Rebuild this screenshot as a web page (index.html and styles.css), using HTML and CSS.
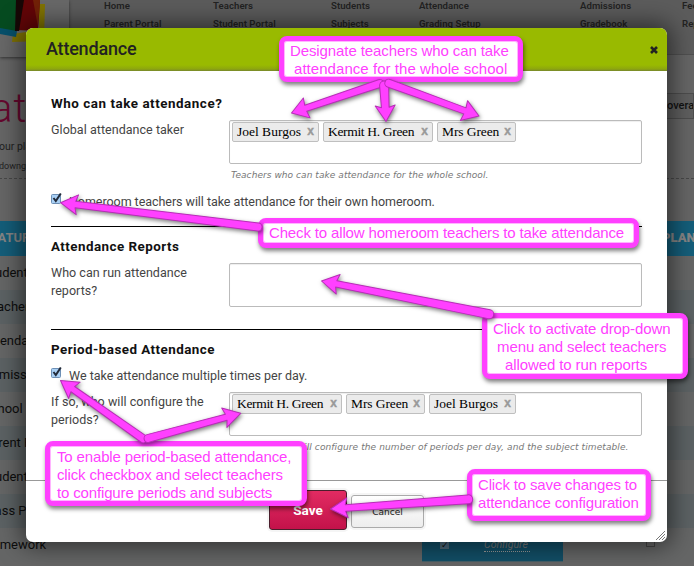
FILE: index.html
```html
<!DOCTYPE html>
<html lang="en">
<head>
<meta charset="utf-8">
<title>Attendance</title>
<link rel="stylesheet" href="styles.css">
</head>
<body>
<div class="page">
  <header class="top">
    <div class="logo">
      <svg width="69" height="56" viewBox="0 0 69 56">
        <path d="M39 4l6 0-1 37-32 1 1-8 26-4z" fill="#807303"/>
        <path d="M0 0h17l-1 31-16 1z" fill="#064b20"/>
        <path d="M0 28l17 3-1 6-16-3z" fill="#07506b"/>
        <path d="M16 0h24l-2 31-22-1z" fill="#620507"/>
        <path d="M16 0h8l-5 31h-4z" fill="#170706"/>
        <path d="M33 0h7l-2 27z" fill="#722107"/>
      </svg>
    </div>
    <nav class="nav">
      <div><span>Home</span><span>Parent Portal</span></div>
      <div><span>Teachers</span><span>Student Portal</span></div>
      <div><span>Students</span><span>Subjects</span></div>
      <div><span>Attendance</span><span>Grading Setup</span></div>
      <div><span>Admissions</span><span>Gradebook</span></div>
      <div><span>Fees</span><span>Reports</span></div>
    </nav>
  </header>
  <section class="intro">
    <div class="intro-row"><h1>at</h1><span class="select">overall</span></div>
    <p class="plan-note">our plan</p>
    <p class="small-note">downgrade</p>
  </section>
  <section class="table">
    <div class="row head"><span>FEATURES</span><b>PLAN</b></div>
    <div class="row"><span>Students</span></div>
    <div class="row alt"><span>Teachers</span></div>
    <div class="row"><span>Attendance</span></div>
    <div class="row alt"><span>Admissions</span></div>
    <div class="row"><span>School</span></div>
    <div class="row alt"><span>Parent Portal</span></div>
    <div class="row"><span>Student</span></div>
    <div class="row alt"><span>Class Pages</span></div>
    <div class="row last"><span>Homework <i>''</i></span>
      <div class="plan"><i class="dim-box">✓</i><em>Configure</em></div><i class="dim-box empty"></i></div>
  </section>
</div>

<div class="modal">
  <div class="modal-head"><h2>Attendance</h2>
    <svg class="close" width="8" height="8" viewBox="0 0 8 8"><path d="M1 1l6 6M7 1L1 7" stroke="#222" stroke-width="2.6"/></svg>
  </div>
  <div class="modal-body">
    <section class="group first">
      <h3 class="w1">Who can take attendance?</h3>
      <div class="field">
        <label>Global attendance taker</label>
        <div>
          <div class="box">
            <span class="chip joel"><span>Joel Burgos</span><b>x</b></span>
            <span class="chip kermit"><span>Kermit H. Green</span><b>x</b></span>
            <span class="chip mrs"><span>Mrs Green</span><b>x</b></span>
          </div>
          <p class="hint">Teachers who can take attendance for the whole school.</p>
        </div>
      </div>
      <div class="check homeroom">
        <svg width="12" height="12" viewBox="0 0 12 12"><rect x=".5" y="1.5" width="9" height="9" rx="1" fill="#a9d0f5" stroke="#6d8fb5"/><path d="M2.5 5l2.3 3L9.8.5" fill="none" stroke="#222b3a" stroke-width="2"/></svg>
        <span>Homeroom teachers will take attendance for their own homeroom.</span>
      </div>
    </section>
    <section class="group second">
      <h3 class="w2">Attendance Reports</h3>
      <div class="field">
        <label>Who can run attendance<br>reports?</label>
        <div><div class="box"></div></div>
      </div>
    </section>
    <section class="group third">
      <h3 class="w3">Period-based Attendance</h3>
      <div class="check">
        <svg width="12" height="12" viewBox="0 0 12 12"><rect x=".5" y="1.5" width="9" height="9" rx="1" fill="#a9d0f5" stroke="#6d8fb5"/><path d="M2.5 5l2.3 3L9.8.5" fill="none" stroke="#222b3a" stroke-width="2"/></svg>
        <span>We take attendance multiple times per day.</span>
      </div>
      <div class="field">
        <label>If so, who will configure the<br>periods?</label>
        <div>
          <div class="box">
            <span class="chip kermit"><span>Kermit H. Green</span><b>x</b></span>
            <span class="chip mrs"><span>Mrs Green</span><b>x</b></span>
            <span class="chip joel"><span>Joel Burgos</span><b>x</b></span>
          </div>
          <p class="hint long">Teachers who will configure the number of periods per day, and the subject timetable.</p>
        </div>
      </div>
    </section>
  </div>
  <footer class="modal-foot">
    <button class="save">Save</button><button class="cancel">Cancel</button>
    <svg class="grip" width="9" height="9" viewBox="0 0 9 9"><path d="M0 9L9 0M3 9L9 3M6 9L9 6" stroke="#777"/></svg>
  </footer>
</div>

<div class="callout c1"><span>Designate teachers who can take</span><span class="in4">attendance for the whole school</span></div>
<div class="callout c2"><span>Check to allow homeroom teachers to take attendance</span></div>
<div class="callout c3"><span>Click to activate drop-down</span><span class="in4">menu and select teachers</span><span class="in12">allowed to run reports</span></div>
<div class="callout c4"><span>To enable period-based attendance,</span><span>click checkbox and select teachers</span><span>to configure periods and subjects</span></div>
<div class="callout c5"><span>Click to save changes to</span><span>attendance configuration</span></div>

<svg class="arrows" width="694" height="566" viewBox="0 0 694 566">
  <path transform="translate(291.5 113) rotate(-18.5)" d="M0 0L16-10.5 15-3.2 93-4A4 4 0 0 1 93 4L15 3.2 16 10.5Z"/>
  <path transform="translate(386 121.5) rotate(-93)" d="M0 0L16-10 14-3.8 36-4.5A4 4 0 0 1 36 4.5L14 3.8 16 10Z"/>
  <path transform="translate(479 116) rotate(200)" d="M0 0L16-10.5 15-3.2 96-4A4 4 0 0 1 96 4L15 3.2 16 10.5Z"/>
  <path transform="translate(60.5 202.7) rotate(7)" d="M0 0L17-10 15-3.2 199-4A4 4 0 0 1 199 4L15 3.2 17 10Z"/>
  <path transform="translate(321.5 281) rotate(11.2)" d="M0 0L17-10 15-3.2 171-4.5A4 4 0 0 1 171 4.5L15 3.2 17 10Z"/>
  <path transform="translate(60.5 380.5) rotate(35.2)" d="M0 0L17-10 15-3.2 101-4A4 4 0 0 1 101 4L15 3.2 17 10Z"/>
  <path transform="translate(240.7 413.3) rotate(164.8)" d="M0 0L17-10 15-3.2 96-4A4 4 0 0 1 96 4L15 3.2 17 10Z"/>
  <path transform="translate(330.5 509) rotate(-4)" d="M0 0L17-10 15-3.2 138-4.5A4 4 0 0 1 138 4.5L15 3.2 17 10Z"/>
</svg>
</body>
</html>
```
FILE: styles.css
```css
* { box-sizing: border-box; margin: 0; padding: 0; }
body { width: 694px; height: 566px; overflow: hidden; position: relative; background: #666; font-family: Roboto, sans-serif; color: #444; }

.page { width: 694px; height: 566px; overflow: hidden; }
.top { display: flex; height: 55px; background: #5c5c5c; border-bottom: 1px solid #505050; }
.logo { flex: none; width: 69px; height: 57px; background: #686868; box-shadow: 0 1px 3px #333; }
.logo svg { display: block; }
.nav { flex: none; display: grid; grid-template-columns: 109px 118px 88px 161px 102px 60px; margin-left: 35px; font-size: 9.6px; font-weight: 600; line-height: 18px; color: #222; letter-spacing: .05px; margin-top: -3px; height: 40px; }
.nav span { display: block; white-space: nowrap; }
.intro { height: 166px; background: #666; }
.intro-row { display: flex; justify-content: space-between; height: 77px; padding-top: 22px; }
h1 { font-size: 40px; line-height: 64px; font-weight: 300; color: #65082e; margin-left: -9px; letter-spacing: 1px; }
.select { width: 50px; height: 26px; margin-top: 16px; border: 1px solid #4d4d4d; background: #5f5f5f; padding-left: 22px; font-size: 11px; font-weight: 500; line-height: 23px; color: #111; overflow: hidden; }
.plan-note { font-size: 10.5px; line-height: 14px; height: 13px; margin-top: 8px; color: #222; margin-left: -1px; }
.small-note { font-size: 9px; line-height: 26px; height: 26px; color: #222; border-bottom: 1px dashed #484848; margin-left: -1px; }

.row { display: flex; height: 34px; line-height: 34px; background: #656666; font-size: 13px; color: #0d0d0d; }
.row > span { width: 439px; flex: none; margin-left: -17px; white-space: nowrap; }
.row.alt { background: #5c6264; }
.row.head { height: 35px; background: #145e7a; color: #858585; font-weight: 700; justify-content: space-between; }
.row.head b { width: 32px; }
.row.last i { color: #722; }
.plan { width: 141px; flex: none; height: 34px; background: #124f67; border-bottom: 1px solid #465f68; display: flex; gap: 35px; padding-left: 18px; }
.plan em { font-size: 10.5px; line-height: 9px; height: 12px; width: 46px; margin-top: 12px; color: #777; border-bottom: 1px dotted #999; }
.row.last .dim-box { width: 9px; height: 9px; margin-top: 12px; border: 1px solid #506875; background: #4b6a7e; font-size: 9px; line-height: 8px; color: #111; font-style: normal; }
.row.last .dim-box.empty { background: #666; margin: 10px 0 0 83px; border-color: #444; }

.modal { position: absolute; left: 26px; top: 28px; width: 641px; height: 514px; border-radius: 7px; background: #fff; box-shadow: 0 0 24px 4px rgba(0,0,0,.55); overflow: hidden; display: flex; flex-direction: column; }
.modal-head { height: 43px; flex: none; background: linear-gradient(#99ba00 0, #99ba00 37px, #8da60e 41px, #77872d 43px); display: flex; align-items: center; justify-content: space-between; padding: 0 9px 2px 20px; }
h2 { font-size: 18px; font-weight: 500; color: #222; line-height: 24px; letter-spacing: -.2px; }
.close { display: block; margin-top: 3px; }
.modal-body { height: 409px; flex: none; padding: 0 25px; }
.group { font-size: 12.5px; line-height: 18px; }
.first { height: 156px; padding-top: 24px; border-bottom: 1px solid #000; }
.second { height: 103px; padding-top: 11px; border-bottom: 1px solid #000; }
.third { padding-top: 11px; }
h3 { font-size: 13.4px; line-height: 18px; font-weight: 700; color: #111; white-space: nowrap; }
.w1 { letter-spacing: .54px; }
.w2 { letter-spacing: .46px; }
.w3 { letter-spacing: .46px; }
.field { display: grid; grid-template-columns: 178px 413px; margin-top: 7px; }
.field label { padding-top: 1px; white-space: nowrap; letter-spacing: .04px; }
.box { height: 44px; border: 1px solid #bbb; border-radius: 2px; padding: 1px 2px; display: flex; gap: 4px; box-shadow: inset 0 1px 1px #eee; }
.chip { height: 20px; border: 1px solid #bfbfbf; border-radius: 2px; background: #ebebeb; display: flex; justify-content: space-between; padding: 0 4px; font-family: "Liberation Serif", serif; font-size: 13.5px; line-height: 18px; color: #000; white-space: nowrap; }
.chip b { font-family: "Liberation Sans", sans-serif; font-size: 12px; line-height: 17px; color: #999; -webkit-text-stroke: .4px #999; letter-spacing: 0; }
.joel { width: 87px; }
.kermit { width: 110px; letter-spacing: -.33px; }
.mrs { width: 79px; letter-spacing: -.1px; }
.hint { font-family: "DejaVu Sans", sans-serif; font-style: italic; font-size: 9px; line-height: 12px; padding: 5px 0 0 2px; color: #777; white-space: nowrap; letter-spacing: .06px; }
.hint.long { letter-spacing: .1px; }
.check { display: flex; gap: 6px; white-space: nowrap; }
.check svg { flex: none; display: block; }
.homeroom { margin-top: 12px; letter-spacing: -.05px; }
.third .check { margin-top: 8px; }
.modal-foot { flex: 1; border-top: 1px solid #999; display: flex; position: relative; padding: 9px 0 0 243px; gap: 4px; }
.save { width: 78px; height: 40px; border: 1px solid #4b1e2c; border-radius: 3px; background: linear-gradient(#e22b62, #c3124a); color: #fff; font: 700 13.5px Roboto, sans-serif; box-shadow: 0 0 0 2px #f5f5f5; }
.cancel { width: 73px; height: 33px; margin-top: 5px; border: 1px solid #aaa; border-radius: 3px; background: linear-gradient(#fff, #ededed); color: #222; font: 9px "DejaVu Sans", sans-serif; box-shadow: 0 0 0 2px #f5f5f5; }
.grip { position: absolute; right: 2px; bottom: 2px; }

.callout { position: absolute; background: #fff; border: 5px solid #ff40ff; border-radius: 8px; box-shadow: 1px 3px 4px rgba(0,0,0,.5), inset 0 0 0 1px #ffb5ff; color: #ff40ff; font: 15px/18px "Liberation Sans", sans-serif; letter-spacing: -.15px; padding: 2px 6px; }
.callout span { display: block; white-space: nowrap; }
.callout .in4 { padding-left: 4px; }
.callout .in12 { padding-left: 12px; }
.c1 { left: 279px; top: 36px; width: 244px; height: 46px; padding-top: 1px; letter-spacing: -.1px; }
.c1 .in4 { letter-spacing: .05px; }
.c2 { left: 258px; top: 218px; width: 381px; height: 30px; padding-top: 1px; }
.c3 { left: 482px; top: 313px; width: 206px; height: 66px; letter-spacing: -.1px; }
.c4 { left: 45px; top: 441px; width: 262px; height: 65px; padding-left: 7px; }
.c5 { left: 467px; top: 469px; width: 184px; height: 52px; }
.arrows { position: absolute; left: 0; top: 0; pointer-events: none; filter: drop-shadow(1px 2px 2px rgba(0,0,0,.5)); }
.arrows path { fill: #ff40ff; stroke: #b72db7; stroke-width: 1; stroke-linejoin: round; }
```
